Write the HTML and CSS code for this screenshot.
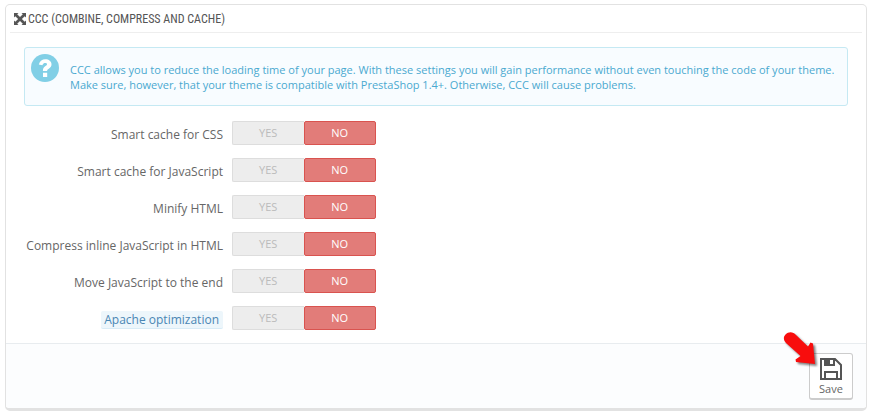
FILE: index.html
```html
<!DOCTYPE html>
<html lang="en">
<head>
    <meta charset="UTF-8">
    <meta name="viewport" content="width=device-width, initial-scale=1.0">
    <title>Performance</title>
    <link rel="stylesheet" href="styles.css">
</head>
<body>
<form class="panel">
    <h3 class="panel-heading">
        <svg class="icon-fullscreen" viewBox="0 0 12 12" aria-hidden="true">
            <path d="M0 0h4.500L3.200 1.300 6 4.100 8.800 1.300 7.500 0H12v4.500l-1.300-1.300L7.900 6l2.800 2.800L12 7.500V12H7.500l1.300-1.300L6 7.900l-2.800 2.800L4.500 12H0V7.500l1.300 1.300L4.100 6 1.300 3.200 0 4.500z"/>
        </svg>
        CCC (COMBINE, COMPRESS AND CACHE)
    </h3>

    <div class="alert">
        <svg class="icon-help" viewBox="0 0 28 28" aria-hidden="true">
            <circle cx="14" cy="14" r="14" fill="#81cfe6"/>
            <path d="M7.800 10.400C9 7 11.200 5.300 14.300 5.300c3.600 0 6.200 2.100 6.200 5 0 2-.9 3.300-2.700 4.400-1.200.7-1.700 1.200-1.700 2.300h-4.200c0-2.500.7-3.700 2.600-4.900 1.100-.7 1.500-1.100 1.500-1.800 0-.8-.7-1.300-1.800-1.300-1.300 0-2 .6-2.900 2.200zM12 18.800h4.200V23H12z" fill="#fff"/>
        </svg>
        <p class="alert-text">
            CCC allows you to reduce the loading time of your page. With these settings you will gain performance without even touching the code of your theme.<br>
            Make sure, however, that your theme is compatible with PrestaShop 1.4+. Otherwise, CCC will cause problems.
        </p>
    </div>

    <div class="form-wrapper">
        <div class="form-group" role="radiogroup" aria-labelledby="css-label">
            <span class="control-label" id="css-label">Smart cache for CSS</span>
            <span class="switch">
                <input type="radio" name="css_cache" id="css_on" value="1"><label for="css_on">YES</label>
                <input type="radio" name="css_cache" id="css_off" value="0" checked><label for="css_off">NO</label>
            </span>
        </div>
        <div class="form-group" role="radiogroup" aria-labelledby="js-label">
            <span class="control-label" id="js-label">Smart cache for JavaScript</span>
            <span class="switch">
                <input type="radio" name="js_cache" id="js_on" value="1"><label for="js_on">YES</label>
                <input type="radio" name="js_cache" id="js_off" value="0" checked><label for="js_off">NO</label>
            </span>
        </div>
        <div class="form-group" role="radiogroup" aria-labelledby="html-label">
            <span class="control-label" id="html-label">Minify HTML</span>
            <span class="switch">
                <input type="radio" name="minify_html" id="html_on" value="1"><label for="html_on">YES</label>
                <input type="radio" name="minify_html" id="html_off" value="0" checked><label for="html_off">NO</label>
            </span>
        </div>
        <div class="form-group" role="radiogroup" aria-labelledby="inline-label">
            <span class="control-label" id="inline-label">Compress inline JavaScript in HTML</span>
            <span class="switch">
                <input type="radio" name="inline_js" id="inline_on" value="1"><label for="inline_on">YES</label>
                <input type="radio" name="inline_js" id="inline_off" value="0" checked><label for="inline_off">NO</label>
            </span>
        </div>
        <div class="form-group" role="radiogroup" aria-labelledby="defer-label">
            <span class="control-label" id="defer-label">Move JavaScript to the end</span>
            <span class="switch">
                <input type="radio" name="js_defer" id="defer_on" value="1"><label for="defer_on">YES</label>
                <input type="radio" name="js_defer" id="defer_off" value="0" checked><label for="defer_off">NO</label>
            </span>
        </div>
        <div class="form-group" role="radiogroup" aria-labelledby="apache-label">
            <span class="control-label" id="apache-label"><span class="label-tooltip">Apache optimization</span></span>
            <span class="switch">
                <input type="radio" name="apache" id="apache_on" value="1"><label for="apache_on">YES</label>
                <input type="radio" name="apache" id="apache_off" value="0" checked><label for="apache_off">NO</label>
            </span>
        </div>
    </div>

    <div class="panel-footer">
        <button type="button" class="btn-save">
            <svg class="icon-save" viewBox="0 0 22 22" aria-hidden="true">
                <path d="M1 1h14l6 6v14H1zM5 21v-7h12v7M5 1v6h9V1" fill="none" stroke="#555" stroke-width="2"/>
                <path d="M5 1h5v6H5z" fill="#555"/>
            </svg>
            Save
        </button>
        <svg class="pointer" viewBox="0 0 36 38" aria-hidden="true">
            <path d="M2.500 3.500C5.500.5 10 .5 13 4l12 11.500 2.500-4 2.500 1L32 33 13 31l-.5-2.500 5-3.500L3 12C.5 9.500 0 6 2.500 3.500z" fill="#f80d0d"/>
        </svg>
    </div>
</form>
</body>
</html>
```

FILE: styles.css
```css
* {
    box-sizing: border-box;
}

body {
    margin: 0;
    padding: 4px 3px 0 5px;
    background-color: #fff;
    color: #666;
    font-family: "Open Sans", sans-serif;
    font-size: 12px;
}

.panel {
    border: 1px solid #e2e2e2;
    border-bottom-width: 3px;
    border-radius: 5px;
}

.panel-heading {
    display: flex;
    align-items: center;
    gap: 2px;
    height: 28px;
    margin: 0 4px 14px;
    padding-left: 4px;
    border-bottom: 1px solid #eee;
    color: #555;
    font-family: "Ubuntu Condensed", "Liberation Sans Narrow", "Roboto Condensed", "Open Sans", sans-serif;
    font-size: 12px;
    font-weight: 400;
}

.icon-fullscreen {
    width: 12px;
    height: 12px;
    fill: #555;
}

.alert {
    display: flex;
    gap: 11px;
    margin: 0 18px 15px;
    padding: 6px;
    min-height: 59px;
    border: 1px solid #c5e9f3;
    border-radius: 3px;
    background-color: #f8fcff;
    color: #4aa9d0;
}

.icon-help {
    flex: none;
    width: 28px;
    height: 28px;
}

.alert-text {
    margin: 8px 0 0;
    font-size: 11px;
    line-height: 15px;
}

.form-wrapper {
    display: grid;
    gap: 13px;
    margin: 0 4px 13px;
}

.form-group {
    display: grid;
    grid-template-columns: 25% 144px;
    column-gap: 9px;
    height: 24px;
}

.control-label {
    padding-top: 5px;
    line-height: 17px;
    text-align: right;
}

.label-tooltip {
    display: inline-block;
    padding: 0 4px 0 3px;
    border-bottom: 1px solid #d8ebf6;
    border-radius: 2px;
    background-color: #edf6fb;
    color: #4a86b4;
}

.switch {
    display: flex;
    position: relative;
}

.switch input {
    position: absolute;
    margin: 0;
    opacity: 0;
}

.switch label {
    flex: 1;
    border: 1px solid #ddd;
    border-right: 0;
    border-radius: 2px 0 0 2px;
    background-color: #ededed;
    color: #bbb;
    font-size: 11px;
    line-height: 22px;
    text-align: center;
    cursor: pointer;
}

.switch label:last-child {
    border-right: 1px solid #ddd;
    border-radius: 0 2px 2px 0;
}

.switch input:checked + label {
    border: 1px solid #d9534f;
    border-radius: 2px;
    background-color: #e27c79;
    color: #fff;
}

.panel-footer {
    display: flex;
    justify-content: flex-end;
    position: relative;
    padding: 9px 13px 8px;
    border-top: 1px solid #e8ecef;
    border-radius: 0 0 4px 4px;
    background-color: #fcfdfe;
}

.btn-save {
    display: flex;
    flex-direction: column;
    align-items: center;
    gap: 1px;
    width: 44px;
    height: 47px;
    padding: 4px 0 0;
    border: 1px solid #ccc;
    border-bottom-width: 2px;
    border-radius: 3px;
    background-color: #fff;
    color: #666;
    font-family: inherit;
    font-size: 11px;
    line-height: 15px;
    cursor: pointer;
}

.icon-save {
    width: 22px;
    height: 22px;
}

/* red arrow laid over the footer edge */
.pointer {
    position: absolute;
    top: -13px;
    right: 47px;
    width: 36px;
    height: 38px;
    filter: drop-shadow(2px 2px 1px rgba(0, 0, 0, 0.5));
}
```
